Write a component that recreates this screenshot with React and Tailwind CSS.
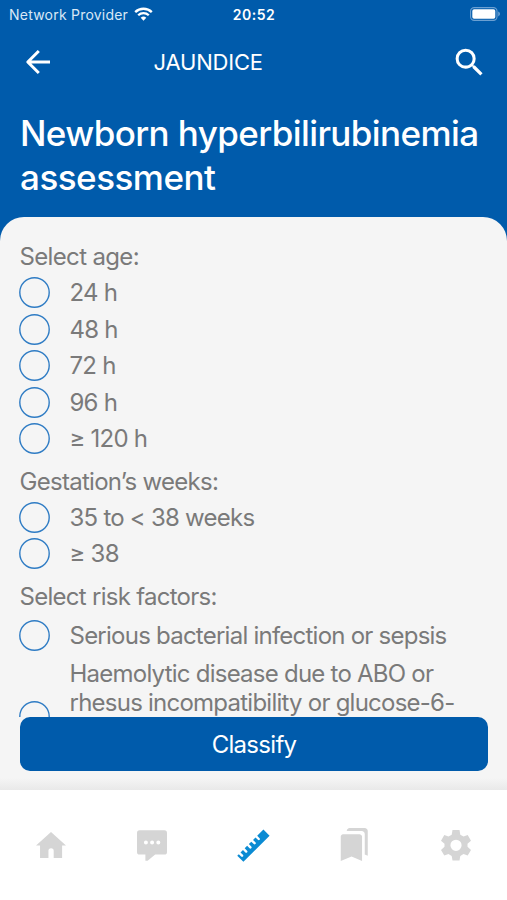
const ages = ["24 h", "48 h", "72 h", "96 h", "≥ 120 h"];

function Circle() {
  return (
    <svg width="31" height="31" viewBox="0 0 31 31" className="shrink-0">
      <circle cx="15.5" cy="15.5" r="14.7" fill="none" stroke="#2f7cc4" strokeWidth="1.4" />
    </svg>
  );
}

function Option({ children }) {
  return (
    <label className="flex h-[36.6px] items-center gap-[19.5px]">
      <Circle />
      <span className="whitespace-nowrap">{children}</span>
    </label>
  );
}

function StatusBar() {
  return (
    <div className="grid h-7 grid-cols-3 items-center pl-[9px] pr-[6px]">
      <div className="flex items-center gap-[6px] text-[14px] tracking-[0.22px] text-[#d9e8f6]">
        <span className="whitespace-nowrap">Network Provider</span>
        <svg width="19" height="14" viewBox="0 0 19 14" fill="none" className="-mt-px shrink-0">
          <path d="M1.2 5.1a12 12 0 0 1 16.6 0" stroke="#fff" strokeWidth="2.4" />
          <path d="M4.2 8.3a7.6 7.6 0 0 1 10.6 0" stroke="#fff" strokeWidth="2.3" />
          <path d="M6.7 10.8a4 4 0 0 1 5.6 0L9.5 13.8z" fill="#fff" />
        </svg>
      </div>
      <div className="-ml-[2px] text-center text-[14px] font-semibold tracking-[0.5px]">20:52</div>
      <svg width="31" height="14" viewBox="0 0 31 14" className="justify-self-end -mt-px">
        <rect x="0.6" y="0.6" width="26.4" height="12.8" rx="3.6" fill="none" stroke="#6ba0d2" strokeWidth="1.1" />
        <rect x="2.3" y="2.3" width="23" height="9.4" rx="1.8" fill="#fff" />
        <path d="M28.2 4.6c2.4.9 2.4 3.9 0 4.8z" fill="#6ba0d2" />
      </svg>
    </div>
  );
}

function TabBar() {
  return (
    <nav className="grid h-[110px] grid-cols-5 bg-white pt-[36.500px] text-[#d5d5d5]">
      <svg className="mx-auto" width="36" height="36" viewBox="0 0 24 24" fill="currentColor">
        <path d="M10.300 20.600v-4.700a1.750 1.750 0 0 1 3.500 0v4.700h5.600v-8.300H22L12 3.300 2 12.300h2.700v8.300z" />
      </svg>
      <svg className="mx-auto" width="36" height="36" viewBox="0 0 36 36" fill="currentColor">
        <path
          fillRule="evenodd"
          d="M5.600 3.300h24.800a2.600 2.600 0 0 1 2.600 2.600v19a2.600 2.600 0 0 1-2.600 2.600h-9.200l-7.600 6.300h-2.200v-6.300H5.600A2.600 2.600 0 0 1 3 24.900v-19a2.600 2.600 0 0 1 2.600-2.600zM11.900 13.600a2 2 0 1 0 0 4 2 2 0 1 0 0-4zm6.200 0a2 2 0 1 0 0 4 2 2 0 1 0 0-4zm6.200 0a2 2 0 1 0 0 4 2 2 0 1 0 0-4z"
        />
      </svg>
      <svg className="mx-auto" width="36" height="36" viewBox="0 0 36 36" fill="#0b8bd3">
        <g transform="translate(18.300 18.600) rotate(-45)">
          <path d="M-18.500 4.500v-8.700h2.200v3.400a1.200 1.200 0 0 0 2.400 0v-3.400h3.500v3.400a1.200 1.200 0 0 0 2.400 0v-3.400h3.500v3.400a1.200 1.200 0 0 0 2.400 0v-3.400h3.500v3.400a1.200 1.200 0 0 0 2.400 0v-3.400h3.500v3.400a1.200 1.200 0 0 0 2.400 0v-3.400H18.500v8.700z" />
        </g>
      </svg>
      <svg className="mx-auto" width="36" height="36" viewBox="0.500 0.300 24 24" fill="currentColor">
        <path d="M19 18.600l2 .9V3c0-1.100-.9-2-2-2H8.990C7.890 1 7 1.900 7 3h10c1.100 0 2 .9 2 2v13.600zM15.500 5.200H4.500c-.8 0-1.500.7-1.500 1.500v16.300l7.200-3 7 3V6.700c0-.8-.9-1.500-1.700-1.500z" />
      </svg>
      <svg className="mx-auto" width="36" height="36" viewBox="-18 -18.300 36 36" fill="currentColor">
        <path
          fillRule="evenodd"
          d="M-3.500-15.300h7l.8 4.700 3.200 1.800 4.200-1.500 3.300 5.700-3.500 3.100v3l3.500 3.100-3.300 5.700-4.200-1.500-3.200 1.800-.8 4.700h-7l-.8-4.700-3.200-1.800-4.200 1.500-3.300-5.700 3.500-3.100v-3l-3.500-3.100 3.300-5.700 4.200 1.500 3.200-1.800zM0-5.600a5.600 5.600 0 1 0 0 11.200 5.600 5.600 0 1 0 0-11.200z"
        />
      </svg>
    </nav>
  );
}

export default function App() {
  return (
    <div className="flex h-[900px] w-[507px] flex-col overflow-hidden bg-[#005bab] font-['Inter',sans-serif] text-white">
      <StatusBar />
      <header className="flex h-[68px] items-center pl-5 pr-[19px]">
        <svg width="36" height="36" viewBox="0 0 36 36" fill="none" stroke="#fff" strokeWidth="3" strokeLinejoin="round">
          <path d="M30 18H8M18.800 7 7.800 18l11 11" />
        </svg>
        <h1 className="ml-[97.500px] text-[22px] leading-none tracking-[-0.2px]">JAUNDICE</h1>
        <svg className="ml-auto" width="37" height="37" viewBox="0 0 24 24" fill="#fff">
          <path d="M15.500 14h-.79l-.28-.27A6.471 6.471 0 0 0 16 9.500 6.500 6.500 0 1 0 9.500 16c1.610 0 3.090-.59 4.230-1.570l.27.28v.79l5 4.990L20.490 19l-4.990-5zm-6 0C7.010 14 5 11.990 5 9.500S7.010 5 9.500 5 14 7.010 14 9.500 11.990 14 9.500 14z" />
        </svg>
      </header>
      <h2 className="h-[121px] whitespace-nowrap pl-5 pt-[15px] text-[35px] font-medium leading-[44px] tracking-[-0.6px]">
        Newborn hyperbilirubinemia
        <br />
        <span className="tracking-[-0.5px]">assessment</span>
      </h2>

      <main className="flex h-[573px] flex-col rounded-t-[24px] bg-[#f5f5f5] px-[19px] text-[#7a7a7a]">
        <div className="h-[500px] overflow-hidden pt-[25px] text-[24px] leading-[29px] tracking-[-0.760px]">
          <p className="h-[32.200px] pl-[0.500px] tracking-[-0.650px]">Select age:</p>
          {ages.map((a) => (
            <Option key={a}>{a}</Option>
          ))}
          <p className="mt-[10px] h-[31.800px] pl-[0.500px] tracking-[-0.720px]">Gestation’s weeks:</p>
          <Option>35 to &lt; 38 weeks</Option>
          <Option>≥ 38</Option>
          <p className="mt-[10px] h-[35px] pl-[0.500px] tracking-[-0.720px]">Select risk factors:</p>
          <Option>Serious bacterial infection or sepsis</Option>
          <label className="mt-[5px] flex h-[115px] items-center gap-[19.500px]">
            <Circle />
            <span className="self-start whitespace-nowrap">
              Haemolytic disease due to ABO or
              <br />
              rhesus incompatibility or glucose-6-
            </span>
          </label>
        </div>
        <button className="ml-px h-[54px] w-[468px] shrink-0 rounded-[10px] bg-[#005bab] pt-px text-[24px] tracking-[-0.700px] text-white">
          Classify
        </button>
        <div className="-mx-[19px] mt-auto h-[12px] bg-linear-to-b from-[#f5f5f5] to-[#e9e9e9]" />
      </main>
      <TabBar />
    </div>
  );
}
